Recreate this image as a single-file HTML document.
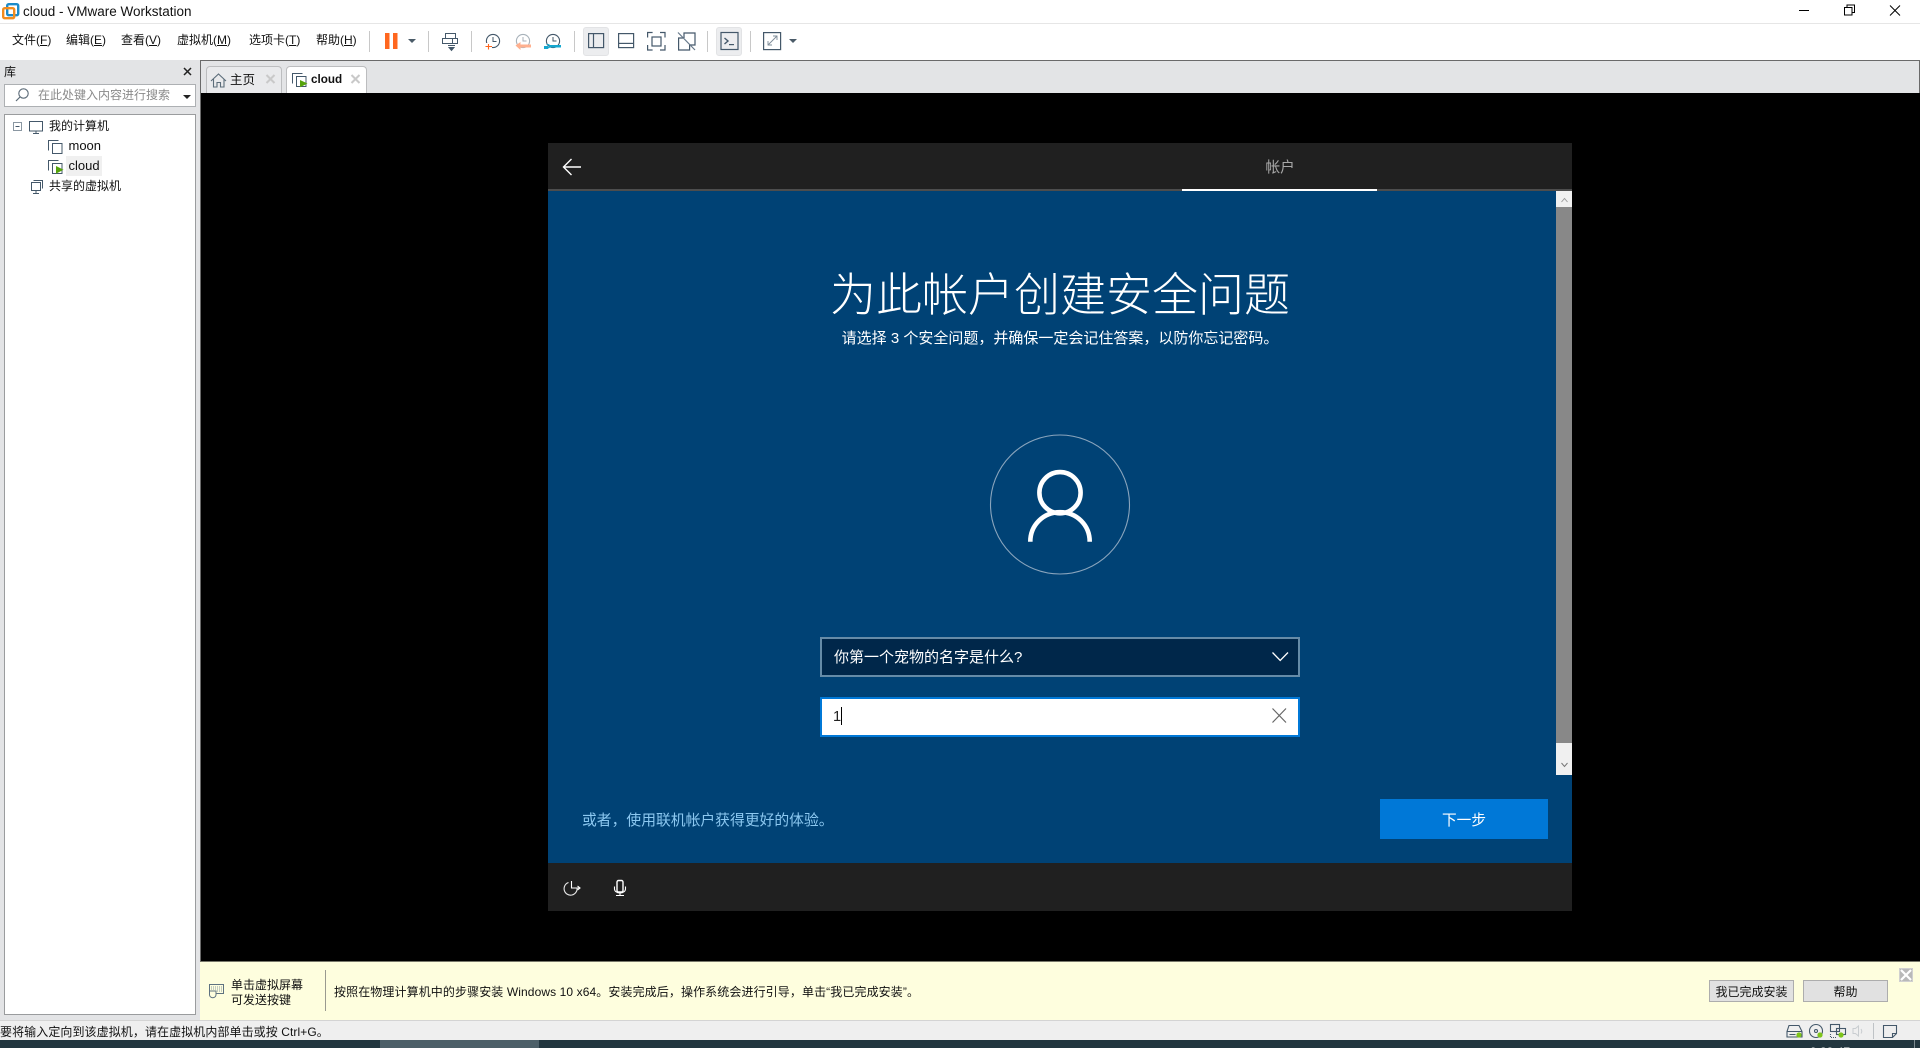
<!DOCTYPE html>
<html lang="zh">
<head>
<meta charset="utf-8">
<title>cloud - VMware Workstation</title>
<style>
html,body{margin:0;padding:0;width:1920px;height:1048px;overflow:hidden;background:#e3e4e6}
body{position:relative;font-family:"Liberation Sans","Noto Sans CJK SC",sans-serif;font-size:12px;color:#111}
.b{position:absolute;box-sizing:border-box}
.t{position:absolute;white-space:pre;line-height:16px;height:16px}
svg{position:absolute;left:0;top:0}
u{text-decoration:underline}
</style>
</head>
<body>
<!-- title bar -->
<div class="b" style="left:0;top:0;width:1920px;height:23px;background:#fff"></div>
<div class="b" style="left:0;top:23px;width:1920px;height:1px;background:#e6e6e6"></div>
<div class="t" style="left:23px;top:4px;font-size:13.5px;color:#111">cloud - VMware Workstation</div>
<!-- menu bar -->
<div class="b" style="left:0;top:24px;width:1920px;height:36px;background:#fff"></div>
<div class="t" style="left:12px;top:32px">文件(<u>F</u>)</div>
<div class="t" style="left:66px;top:32px">编辑(<u>E</u>)</div>
<div class="t" style="left:121px;top:32px">查看(<u>V</u>)</div>
<div class="t" style="left:177px;top:32px">虚拟机(<u>M</u>)</div>
<div class="t" style="left:249px;top:32px">选项卡(<u>T</u>)</div>
<div class="t" style="left:316px;top:32px">帮助(<u>H</u>)</div>
<div class="b" style="left:583px;top:27px;width:26px;height:29px;background:#ecedef;border:1px solid #e2e3e5;border-radius:3px"></div>
<div class="b" style="left:716px;top:27px;width:26px;height:29px;background:#ecedef;border:1px solid #e2e3e5;border-radius:3px"></div>

<!-- main dark border -->
<div class="b" style="left:200px;top:60px;width:1720px;height:1px;background:#6a6a6a"></div>
<div class="b" style="left:200px;top:60px;width:1px;height:902px;background:#6a6a6a"></div>
<div class="b" style="left:1919px;top:60px;width:1px;height:33px;background:#6a6a6a"></div>
<!-- tabs -->
<div class="b" style="left:206px;top:66px;width:76px;height:27px;background:#e9eaec;border:1px solid #bcbdbf;border-bottom:0;border-radius:4px 4px 0 0"></div>
<div class="b" style="left:286px;top:66px;width:81px;height:27px;background:#fff;border:1px solid #bcbdbf;border-bottom:0;border-radius:4px 4px 0 0"></div>
<div class="t" style="left:230px;top:72px;font-size:12.5px">主页</div>
<div class="t" style="left:311px;top:72px;font-size:11.7px;font-weight:bold">cloud</div>
<!-- black -->
<div class="b" style="left:201px;top:93px;width:1719px;height:869px;background:#000"></div>

<!-- library -->
<div class="t" style="left:4px;top:64px;font-size:12px">库</div>
<div class="b" style="left:4px;top:84px;width:192px;height:23px;background:#fff;border:1px solid #adb0b3"></div>
<div class="t" style="left:38px;top:87px;color:#8a8a8a;font-size:12px">在此处键入内容进行搜索</div>
<div class="b" style="left:4px;top:114px;width:192px;height:901px;background:#fff;border:1px solid #9a9c9e"></div>
<div class="b" style="left:66px;top:156px;width:36px;height:20px;background:#f0f0f0"></div>
<div class="t" style="left:49px;top:118px">我的计算机</div>
<div class="t" style="left:68.500px;top:138px;font-size:13px">moon</div>
<div class="t" style="left:68.500px;top:158px;font-size:13px">cloud</div>
<div class="t" style="left:49px;top:178px">共享的虚拟机</div>

<!-- guest window -->
<div class="b" style="left:548px;top:143px;width:1024px;height:46px;background:#202020"></div>
<div class="b" style="left:548px;top:189px;width:1024px;height:2px;background:#4d4d4d"></div>
<div class="b" style="left:1182px;top:189px;width:195px;height:2px;background:#fff"></div>
<div class="b" style="left:548px;top:191px;width:1024px;height:672px;background:#004275"></div>
<div class="b" style="left:548px;top:863px;width:1024px;height:48px;background:#202020"></div>
<div class="t" style="left:1265.500px;top:159px;height:18px;line-height:18px;font-size:14.67px;color:#a8a8a8">帐户</div>
<!-- scrollbar -->
<div class="b" style="left:1556px;top:191px;width:16px;height:584px;background:#888"></div>
<div class="b" style="left:1556px;top:191px;width:16px;height:16px;background:#f0f0f0"></div>
<div class="b" style="left:1556px;top:743px;width:16px;height:32px;background:#f0f0f0"></div>

<div class="t" style="left:548px;top:262px;width:1024px;text-align:center;height:66px;line-height:66px;font-size:46px;font-weight:300;color:#fff">为此帐户创建安全问题</div>
<div class="t" style="left:548px;top:328px;width:1024px;text-align:center;height:22px;line-height:22px;font-size:15px;color:#fff">请选择 3 个安全问题，并确保一定会记住答案，以防你忘记密码。</div>

<div class="b" style="left:820px;top:637px;width:480px;height:40px;background:#00274a;border:2px solid #668ba7"></div>
<div class="t" style="left:834px;top:647px;height:22px;line-height:22px;font-size:15px;color:#fff">你第一个宠物的名字是什么?</div>
<div class="b" style="left:820px;top:697px;width:480px;height:40px;background:#fff;border:2px solid #0078d7"></div>
<div class="t" style="left:833px;top:706px;height:22px;line-height:22px;font-size:14.67px;color:#222">1</div>
<div class="b" style="left:841px;top:707px;width:1px;height:18px;background:#000"></div>

<div class="t" style="left:582px;top:810px;height:22px;line-height:22px;font-size:14.8px;color:#8cc8f0">或者，使用联机帐户获得更好的体验。</div>
<div class="b" style="left:1380px;top:799px;width:168px;height:40px;background:#0078d7"></div>
<div class="t" style="left:1380px;top:810px;width:168px;text-align:center;height:22px;line-height:22px;font-size:14.67px;color:#fff">下一步</div>

<!-- hint bar -->
<div class="b" style="left:200px;top:961px;width:1720px;height:59px;background:#fefede;border-top:1px solid #77776a"></div>
<div class="t" style="left:231px;top:977px;font-size:12px">单击虚拟屏幕</div>
<div class="t" style="left:231px;top:992px;font-size:12px">可发送按键</div>
<div class="b" style="left:325px;top:970px;width:1px;height:41px;background:#9a9a90"></div>
<div class="t" style="left:334px;top:984px;font-size:12px;letter-spacing:.1px">按照在物理计算机中的步骤安装 Windows 10 x64。安装完成后，操作系统会进行引导，单击“我已完成安装”。</div>
<div class="b" style="left:1709px;top:980px;width:85px;height:22px;background:#e1e1e1;border:1px solid #adadad;text-align:center;line-height:22px">我已完成安装</div>
<div class="b" style="left:1803px;top:980px;width:85px;height:22px;background:#e1e1e1;border:1px solid #adadad;text-align:center;line-height:22px">帮助</div>
<div class="b" style="left:1899px;top:968px;width:14px;height:14px;background:#b9b9b9;border:1px solid #d0d0d0"></div>

<!-- status bar -->
<div class="b" style="left:0;top:1020px;width:1920px;height:20px;background:#efefef;border-top:1px solid #d4d4d4"></div>
<div class="t" style="left:0;top:1024px;font-size:12px;letter-spacing:.08px">要将输入定向到该虚拟机，请在虚拟机内部单击或按 Ctrl+G。</div>
<!-- taskbar -->
<div class="b" style="left:0;top:1040px;width:1920px;height:8px;background:#22363f;overflow:hidden">
  <div class="b" style="left:380px;top:0;width:159px;height:8px;background:#4c5f68"></div>
  <div class="t" style="left:1810px;top:4px;font-size:12px;color:#fff">9:33:47</div>
  <div class="b" style="left:1914px;top:0;width:1px;height:8px;background:#7c8a90"></div>
</div>

<svg width="1920" height="1048" viewBox="0 0 1920 1048" fill="none">
  <!-- app icon -->
  <rect x="7.2" y="4.2" width="11" height="11" rx="1.5" stroke="#1c8bc9" stroke-width="2.4"/>
  <rect x="3.2" y="8.2" width="11" height="10" rx="1.5" stroke="#f28c1e" stroke-width="2.4"/>
  <!-- window controls -->
  <path d="M1799 10.5h10" stroke="#000"/>
  <path d="M1844.5 7.5h7.5v7.5h-7.5zM1847 7.5v-2.5h7.5v7.5h-2.5" stroke="#000" stroke-width="1"/>
  <path d="M1890 5.5l10 10M1900 5.5l-10 10" stroke="#000" stroke-width="1"/>
  <!-- toolbar separators -->
  <path d="M369.5 31v21M428.5 31v21M471.5 31v21M574.5 31v21M707.5 31v21M750.5 31v21" stroke="#c8c8c8"/>
  <!-- pause -->
  <rect x="385" y="33" width="4.5" height="16" fill="#ff671f"/>
  <rect x="393" y="33" width="4.5" height="16" fill="#ff671f"/>
  <path d="M408 39h8l-4 4z" fill="#4a5b68"/>
  <!-- send keys -->
  <path d="M445.5 33.5h10v5h-10zM442.5 38.5h10v5h-10zM452.5 38.5h5v5h-5" stroke="#44586a"/>
  <path d="M448 45.5h7M449 47.5h5l-2.5 3z" stroke="#44586a" fill="#44586a"/>
  <!-- snapshot -->
  <circle cx="493" cy="41" r="6.6" stroke="#44586a" stroke-width="1.1"/>
  <path d="M493 37v4.5h3.5" stroke="#44586a"/>
  <rect x="484" y="43" width="8" height="7" fill="#fff"/>
  <path d="M488.5 44v5.5M485.5 46.5h6.5" stroke="#ff671f" stroke-width="1.1"/>
  <!-- revert -->
  <circle cx="523" cy="41" r="6.6" stroke="#a8b2ba" stroke-width="1.1"/>
  <path d="M523 37v4h3.5" stroke="#a8b2ba"/>
  <path d="M515.5 45.5l5-3.500v2.500h10.500v3h-10.500v2.500z" fill="#ffb08f"/>
  <!-- manage -->
  <circle cx="553" cy="41" r="6.6" stroke="#44586a" stroke-width="1.1"/>
  <path d="M553 37v4h3.5" stroke="#44586a"/>
  <path d="M546 44.5c2-1 3-.5 4 .5h11v2.500h-11c-1 1-3 1.500-4 .5v-1l2 .3 1-1.300-1-1z" fill="#14a7cf"/>
  <path d="M544 46h4v3h-4z" fill="#14a7cf"/>
  <!-- layout icons -->
  <g stroke="#44586a" stroke-width="1.2">
    <rect x="588.6" y="33.6" width="15" height="14"/><path d="M593.500 33.6v14"/>
    <rect x="618.6" y="33.6" width="15" height="14"/><path d="M618.6 43.4h15"/>
    <path d="M647.6 37.5v-5h5M660 32.5h5v5M665 45v5h-5M652.6 50h-5v-5"/>
    <rect x="652" y="37" width="9" height="9"/>
    <path d="M683 38h-4.400v12h11V44M684 38v-5h11v12h-5" />
    <path d="M678 32.5l17 17.5" stroke="#66788a"/>
    <rect x="721" y="32.5" width="17" height="17"/>
    <path d="M724.5 38l3.500 3-3.500 3" stroke-width="1.4"/><path d="M729 44.6h5" stroke-width="1.2"/>
    <rect x="763.6" y="32.6" width="17" height="17"/>
  </g>
  <path d="M768 45l9-9M768 41v4h4M773 36h4v4" stroke="#7e8c98" stroke-width=".9"/>
  <path d="M789 39h8l-4 4z" fill="#4a5b68"/>
  <!-- tab icons -->
  <path d="M211 81l7.500-7 7.500 7M213.500 79v8h3.500v-4.500h3.500V87h3.500v-8" stroke="#5c6d7a" stroke-width="1.1"/>
  <path d="M266.5 75l8 8M274.5 75l-8 8" stroke="#c9c9c9" stroke-width="2"/>
  <path d="M351.5 75l8 8M359.5 75l-8 8" stroke="#c9c9c9" stroke-width="2"/>
  <path d="M302.500 73.500h-10v10" stroke="#44586a" stroke-width="1"/>
  <rect x="296.500" y="76.500" width="9.500" height="10" stroke="#44586a" fill="#fff"/>
  <path d="M300 80l7.500 3.500-7.500 3.800z" fill="#55a30b"/>
  <!-- library icons -->
  <path d="M184 68l7 7M191 68l-7 7" stroke="#222" stroke-width="1.5"/>
  <circle cx="23.5" cy="93.5" r="4.700" stroke="#5c6b78" stroke-width="1.1"/>
  <path d="M20 97l-4 4" stroke="#5c6b78" stroke-width="1.2"/>
  <path d="M183 95h8l-4 4z" fill="#222"/>
  <rect x="13.500" y="122.500" width="8" height="8" stroke="#8a97a2"/>
  <path d="M15.500 126.500h4" stroke="#44586a"/>
  <rect x="29.500" y="121.500" width="13" height="9.500" stroke="#44586a"/>
  <path d="M33 133.500h6M36 131v2" stroke="#44586a"/>
  <g stroke="#44586a" stroke-width="1">
    <path d="M58.500 140.500h-10v10"/>
    <rect x="52.500" y="143.500" width="9.500" height="10" fill="#fff"/>
    <path d="M58.500 160.500h-10v10"/>
    <rect x="52.500" y="163.500" width="9.500" height="10" fill="#fff"/>
  </g>
  <path d="M56 166l7.500 3.800-7.500 3.800z" fill="#55a30b"/>
  <g stroke="#44586a" fill="#fff">
    <path d="M33.500 180.500h9v8"/>
    <rect x="31.500" y="182.500" width="9" height="8"/>
    <path d="M33 193.500h6M36 190.500v3"/>
  </g>
  <!-- guest icons -->
  <path d="M581 167h-17.500M571.500 159l-8 8 8 8" stroke="#fff" stroke-width="1.4"/>
  <path d="M1561.500 202l3-3.500 3 3.500" stroke="#999" stroke-width=".9"/>
  <path d="M1561.500 763l3 3.500 3-3.500" stroke="#777" stroke-width="1"/>
  <circle cx="1060" cy="504.500" r="69.500" stroke="#8aa5bd" stroke-width="1.1"/>
  <circle cx="1060" cy="492.700" r="20.600" stroke="#fff" stroke-width="4.600"/>
  <path d="M1030.300 541.700c0-16.500 13-29.500 29.700-29.500s29.700 13 29.700 29.500" stroke="#fff" stroke-width="4.600"/>
  <path d="M1272.500 652.500l7.700 8 7.800-8" stroke="#fff" stroke-width="1.300"/>
  <path d="M1272.500 708.500l13.500 14M1286 708.500l-13.500 14" stroke="#666" stroke-width="1.200"/>
  <path d="M568.500 882.500a6.500 6.500 0 1 0 8.500 5" stroke="#e8e8e8" stroke-width="1.100"/>
  <path d="M571.500 881v7h8M577.500 886l2.500 2-2.500 2" stroke="#fff" stroke-width="1.100"/>
  <rect x="617" y="880.500" width="6" height="11.500" rx="1.500" stroke="#fff" stroke-width="1.400"/>
  <path d="M614.500 886.500v2.500a5.500 4 0 0 0 11 0v-2.500M620 893v2M616 895.500h8" stroke="#fff" stroke-width="1.100"/>
  <!-- hint icon -->
  <rect x="209.500" y="984.500" width="14" height="9" stroke="#5e7280" fill="#fefede"/>
  <path d="M211 987h11M211 989h11M211 991h11" stroke="#8b9aa4" stroke-dasharray="1 1"/>
  <path d="M209.500 991v4a3.300 3.300 0 0 0 6.500 0v-4z" stroke="#5e7280" fill="#fefede"/>
  <path d="M1901 970l10 10M1911 970l-10 10" stroke="#fff" stroke-width="2.200"/>
  <!-- status icons -->
  <g stroke="#44586a" stroke-width="1.100">
    <path d="M1789 1025.500h10l3 6v5.500h-15v-5.500zM1787 1031.500h15M1789.500 1034.500h6"/>
    <circle cx="1816" cy="1031" r="6.500"/><circle cx="1816" cy="1031" r="1.500"/>
    <rect x="1830.500" y="1024.500" width="9" height="7"/>
    <rect x="1836.500" y="1028.500" width="9" height="6"/>
    <path d="M1830.500 1034v3.500h6" stroke-dasharray="1 1"/>
    <path d="M1883.500 1025.500h13v8l-4 4h-9zM1896.500 1033.500h-4v4"/>
  </g>
  <path d="M1853 1028.500h2.500l3-2.500v10l-3-2.500h-2.500zM1861 1029c1 1.500 1 3 0 4.500" stroke="#c9cdd0"/>
  <path d="M1873.500 1023v16" stroke="#bfc3c6"/>
  <circle cx="1799" cy="1035" r="2.600" fill="#7ec41b"/>
  <circle cx="1820" cy="1035" r="2.600" fill="#7ec41b"/>
  <circle cx="1841" cy="1035" r="2.600" fill="#7ec41b"/>
</svg>
</body>
</html>
